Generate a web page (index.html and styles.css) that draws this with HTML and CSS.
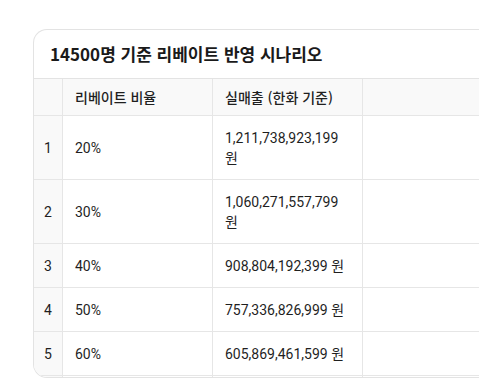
FILE: index.html
```html
<!DOCTYPE html>
<html lang="ko">
<head>
<meta charset="utf-8">
<link rel="stylesheet" href="styles.css">
</head>
<body>
<div class="card">
  <div class="card-title">14500명 기준 리베이트 반영 시나리오</div>
  <table class="grid">
    <thead>
      <tr>
        <th class="idx"></th>
        <th class="c1">리베이트 비율</th>
        <th class="c2">실매출 (한화 기준)</th>
        <th class="fill"></th>
      </tr>
    </thead>
    <tbody>
      <tr><td class="idx">1</td><td>20%</td><td>1,211,738,923,199 원</td><td class="fill"></td></tr>
      <tr><td class="idx">2</td><td>30%</td><td>1,060,271,557,799 원</td><td class="fill"></td></tr>
      <tr><td class="idx">3</td><td>40%</td><td>908,804,192,399 원</td><td class="fill"></td></tr>
      <tr><td class="idx">4</td><td>50%</td><td>757,336,826,999 원</td><td class="fill"></td></tr>
      <tr><td class="idx">5</td><td>60%</td><td>605,869,461,599 원</td><td class="fill"></td></tr>
      <tr class="cut"><td class="idx"></td><td></td><td></td><td class="fill"></td></tr>
    </tbody>
  </table>
</div>
</body>
</html>
```

FILE: styles.css
```css
html, body {
  margin: 0;
  padding: 0;
  background: #ffffff;
}
body {
  padding: 29px 0 0 33px;
  height: 392px;
  box-sizing: border-box;
  overflow: hidden;
  font-family: Roboto, "Noto Sans CJK KR", sans-serif;
  color: #1f1f1f;
}
.page {
  overflow: hidden;
}
.card {
  width: 446px;
  height: 347px;
  border: 1px solid #e3e3e3;
  border-right: none;
  border-radius: 14px 0 0 14px;
  overflow: hidden;
  background: #ffffff;
}
.card-title {
  height: 49px;
  box-sizing: border-box;
  padding: 0 0 1px 16px;
  display: flex;
  align-items: center;
  font-family: "Noto Sans CJK KR", sans-serif;
  font-weight: 700;
  font-size: 17px;
  color: #1a1a1a;
  border-bottom: 1px solid #e3e3e3;
}
.grid {
  border-collapse: separate;
  border-spacing: 0;
  table-layout: fixed;
  width: 446px;
  font-size: 14px;
  line-height: 20px;
}
.grid th, .grid td {
  border-right: 1px solid #e6e6e6;
  border-bottom: 1px solid #e6e6e6;
  text-align: left;
  vertical-align: middle;
  padding: 12px 12px 11px;
}
.grid th {
  background: #f9f9f9;
  font-family: "Noto Sans CJK KR", sans-serif;
  font-weight: 500;
  padding: 8px 12px 8px;
}
.grid .idx {
  width: 28px;
  padding-left: 0;
  padding-right: 0;
  text-align: center;
  background: #f9f9f9;
}
.grid .c1, .grid .c2 {
  width: 125px;
}
.grid .fill {
  border-right: none;
}
.grid .cut td {
  padding: 0;
  height: 10px;
}
```
